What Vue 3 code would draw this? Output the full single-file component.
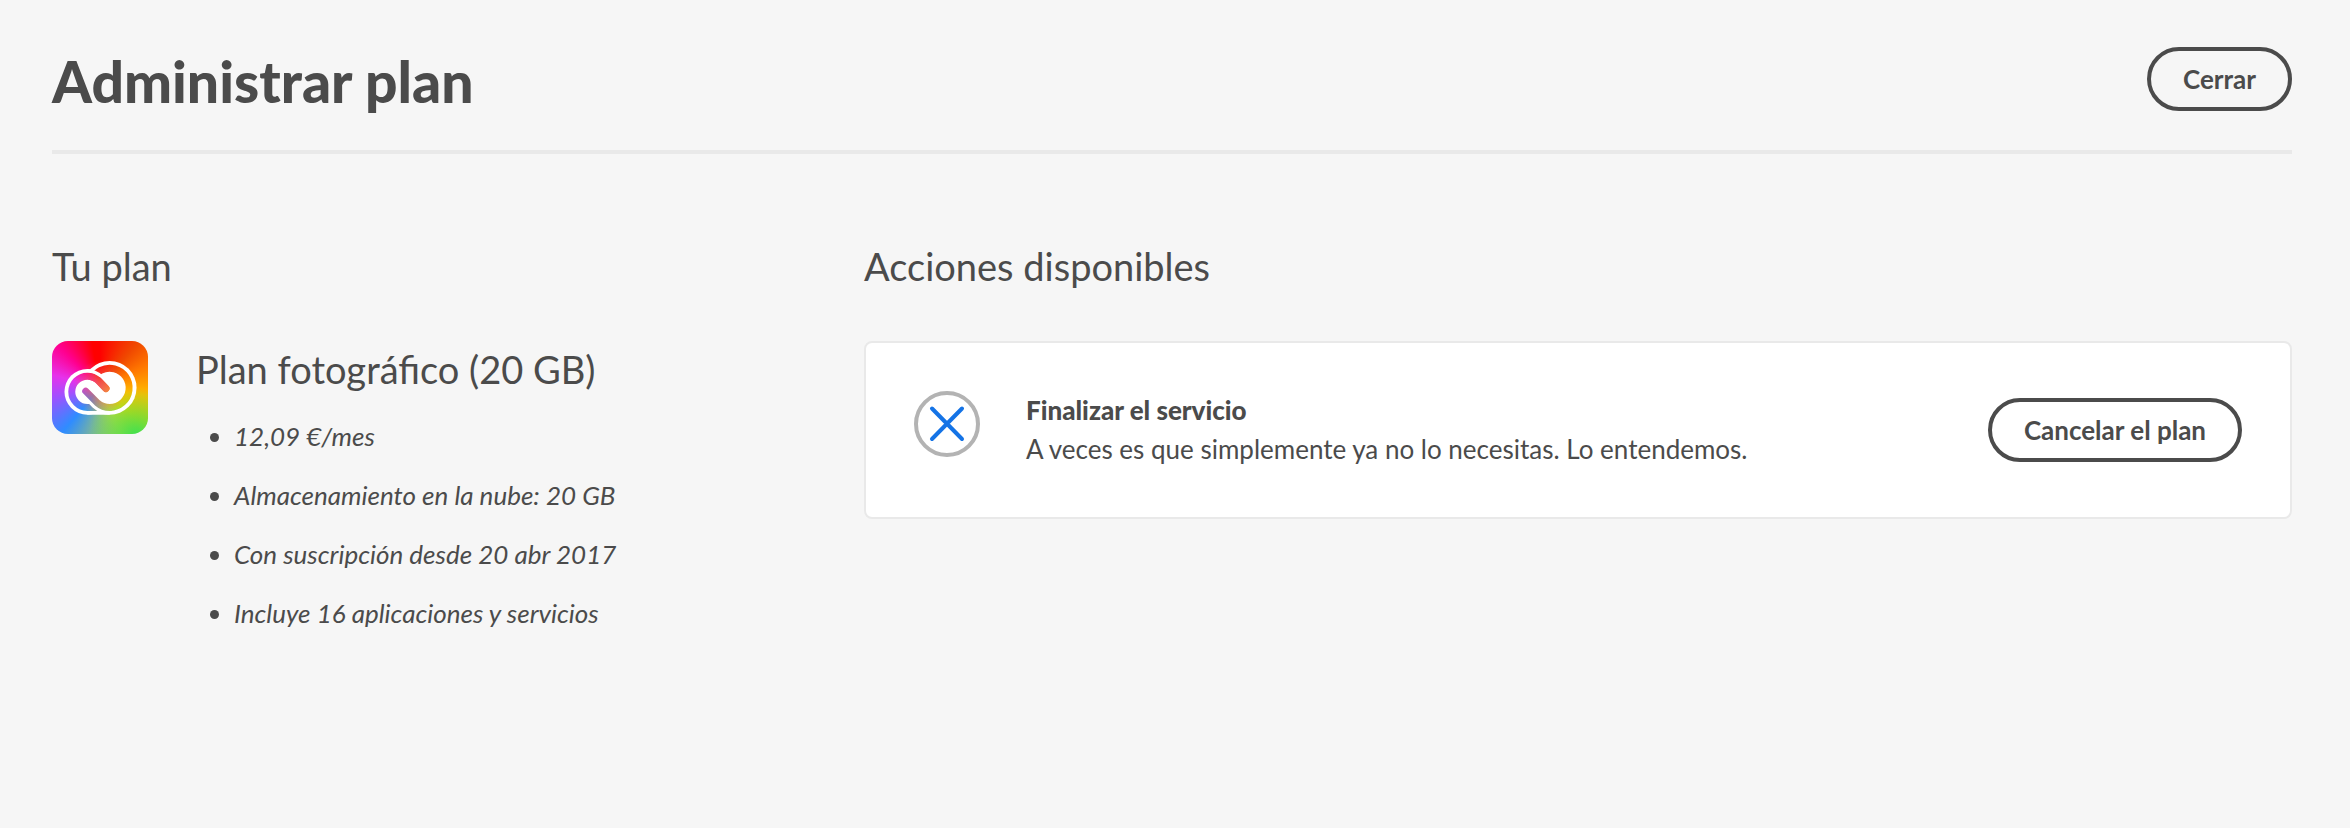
<template>
  <main class="page">
    <header class="page-header">
      <h1>Administrar plan</h1>
      <button type="button" class="btn">Cerrar</button>
    </header>

    <div class="columns">
      <section>
        <h2>Tu plan</h2>
        <div class="plan">
          <svg class="plan-logo" viewBox="0 0 288 280" aria-hidden="true">
            <defs>
              <mask id="cloud" maskUnits="userSpaceOnUse" x="0" y="0" width="288" height="280">
                <!-- silhouette -->
                <circle cx="106" cy="153" r="69" fill="#fff" />
                <circle cx="173" cy="141" r="81" fill="#fff" />
                <rect x="106" y="150" width="67" height="72" fill="#fff" />
                <!-- right ribbon, top half -->
                <path d="M173 200 A59 59 0 1 0 118 119" fill="none" stroke="#000" stroke-width="21" />
                <path d="M106 90 C124 90 136 97 148 108" fill="none" stroke="#fff" stroke-width="12" />
                <!-- left ribbon -->
                <path d="M140 200 H106 A47 47 0 0 1 106 106 C120 106 130 111 139 119 L162 143" fill="none" stroke="#000" stroke-width="21" stroke-linecap="round" />
                <!-- diagonal -->
                <path d="M101 151 L137 187 C147 196 158 200 173 200" fill="none" stroke="#fff" stroke-width="40" />
                <path d="M101 151 L137 187 C147 196 158 200 174 200" fill="none" stroke="#000" stroke-width="21" stroke-linecap="round" />
                <path d="M139 119 L162 143" fill="none" stroke="#000" stroke-width="21" stroke-linecap="round" />
              </mask>
            </defs>
            <rect width="288" height="280" fill="#fff" mask="url(#cloud)" />
          </svg>
          <div class="plan-info">
            <h3>Plan fotográfico (20 GB)</h3>
            <ul class="plan-details">
              <li v-for="detail in details" :key="detail">{{ detail }}</li>
            </ul>
          </div>
        </div>
      </section>

      <section>
        <h2>Acciones disponibles</h2>
        <div class="card">
          <svg class="card-icon" viewBox="0 0 66 66" aria-hidden="true">
            <circle cx="33" cy="33" r="31" fill="none" stroke="#b3b3b3" stroke-width="4" />
            <path d="M18 17.5 L48 48 M48 17.5 L18 48" stroke="#1473e6" stroke-width="4" stroke-linecap="round" />
          </svg>
          <div class="card-text">
            <h4>Finalizar el servicio</h4>
            <p>A veces es que simplemente ya no lo necesitas. Lo entendemos.</p>
          </div>
          <button type="button" class="btn">Cancelar el plan</button>
        </div>
      </section>
    </div>
  </main>
</template>

<script setup>
const details = [
  '12,09 €/mes',
  'Almacenamiento en la nube: 20 GB',
  'Con suscripción desde 20 abr 2017',
  'Incluye 16 aplicaciones y servicios'
]
</script>

<style>
body {
  margin: 0;
  background: #f6f6f6;
}
</style>

<style scoped>
.page {
  padding: 47px 58px 47px 52px;
  color: #4b4b4b;
  font-family: Lato, sans-serif;
  font-size: 26px;
  line-height: 39px;
}

h1,
h2,
h3,
h4,
p,
ul {
  margin: 0;
}

.page-header {
  display: flex;
  justify-content: space-between;
  align-items: flex-start;
  padding-bottom: 35px;
  border-bottom: 4px solid #e9e9e9;
}

h1 {
  font-size: 57px;
  line-height: 68px;
  font-weight: 900;
}

h2,
h3 {
  font-size: 38px;
  line-height: 48px;
  font-weight: 400;
}

h2 {
  margin-bottom: 51px;
}

.btn {
  box-sizing: border-box;
  height: 64px;
  padding: 0 32px;
  border: 4px solid #4b4b4b;
  border-radius: 32px;
  background: transparent;
  color: #4b4b4b;
  font-family: inherit;
  font-size: 26px;
  font-weight: 700;
  white-space: nowrap;
  cursor: pointer;
}

.columns {
  display: grid;
  grid-template-columns: 1fr 2fr;
  gap: 98px;
  padding-top: 88px;
}

.plan {
  display: flex;
  align-items: flex-start;
  gap: 48px;
}

.plan-logo {
  flex: none;
  width: 96px;
  height: 93px;
  border-radius: 16px;
  background:
    radial-gradient(circle at 50% 50%, #f0605a 0%, rgba(240, 96, 90, 0) 40%),
    radial-gradient(circle at 88% 102%, #3ce150 0%, rgba(60, 225, 80, 0) 38%),
    conic-gradient(
      #ff0000 0deg,
      #f04800 40deg,
      #ff7800 65deg,
      #ffbe00 100deg,
      #f4d200 130deg,
      #c8d73c 155deg,
      #78b4a0 190deg,
      #2f8cff 220deg,
      #a050ff 258deg,
      #e632eb 285deg,
      #ff0090 315deg,
      #ff0000 350deg
    );
}

.plan-info {
  padding-top: 4px;
}

.plan-details {
  padding-top: 4px;
  padding-left: 38px;
  font-style: italic;
}

.plan-details li {
  margin-top: 20px;
}

.card {
  display: flex;
  align-items: center;
  padding: 48px;
  border: 2px solid #e9e9e9;
  border-radius: 8px;
  background: #fff;
}

.card-icon {
  flex: none;
  align-self: flex-start;
  width: 66px;
  height: 66px;
  margin-right: 46px;
}

.card-text {
  flex: 1;
}

h4 {
  font-size: 26px;
  font-weight: 900;
}
</style>
